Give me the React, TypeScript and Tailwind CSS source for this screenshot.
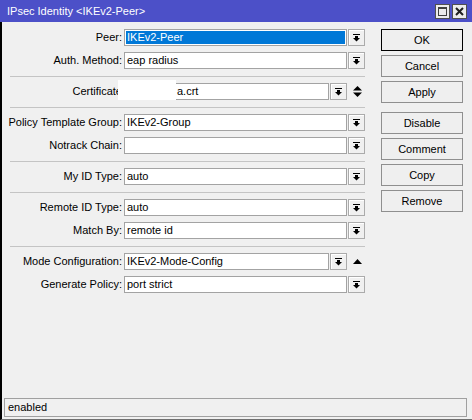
import React from 'react';

type Field = {
  label: string;
  value: string;
  selected?: boolean;
  short?: boolean;
  side?: 'updown' | 'up';
};

const groups: Field[][] = [
  [
    { label: 'Peer:', value: 'IKEv2-Peer', selected: true },
    { label: 'Auth. Method:', value: 'eap radius' },
  ],
  [{ label: 'Certificate', value: 'a.crt', short: true, side: 'updown' }],
  [
    { label: 'Policy Template Group:', value: 'IKEv2-Group' },
    { label: 'Notrack Chain:', value: '' },
  ],
  [{ label: 'My ID Type:', value: 'auto' }],
  [
    { label: 'Remote ID Type:', value: 'auto' },
    { label: 'Match By:', value: 'remote id' },
  ],
  [
    { label: 'Mode Configuration:', value: 'IKEv2-Mode-Config', short: true, side: 'up' },
    { label: 'Generate Policy:', value: 'port strict' },
  ],
];

const buttons = [['OK', 'Cancel', 'Apply'], ['Disable', 'Comment', 'Copy', 'Remove']];

const DropIcon = () => (
  <svg width="7" height="8" viewBox="0 0 7 8" fill="#000">
    <rect x="0" y="0" width="7" height="1" />
    <rect x="2" y="2" width="3" height="2" />
    <polygon points="0,4 7,4 3.5,7.5" />
  </svg>
);

const FieldRow = ({ f }: { f: Field }) => (
  <div className="relative flex h-[17px] items-stretch">
    <div className="w-[120px] text-right leading-[17px] whitespace-nowrap">{f.label}</div>
    <div
      className={`ml-[2px] flex border border-[#a3a3a3] bg-white p-[1px] ${f.short ? 'w-[205px]' : 'w-[223px]'}`}
    >
      <div
        className={`flex-1 pl-[1px] leading-[13px] whitespace-nowrap ${
          f.selected ? 'bg-[#0078d7] text-white' : ''
        } ${f.label === 'Certificate' ? 'pl-[51px]' : ''}`}
      >
        {f.value}
      </div>
    </div>
    <div className="ml-[1px] flex w-[17px] items-center justify-center border border-[#ababab] bg-[#f0f0f0] shadow-[inset_1px_1px_0_#fff]">
      <DropIcon />
    </div>
    {f.side === 'updown' && (
      <svg className="ml-[6px] self-center" width="9" height="11" viewBox="0 0 9 11" fill="#000">
        <polygon points="0,4.5 9,4.5 4.5,0" />
        <polygon points="0,6.5 9,6.5 4.5,11" />
      </svg>
    )}
    {f.side === 'up' && (
      <svg className="ml-[6px] self-center" width="9" height="5" viewBox="0 0 9 5" fill="#000">
        <polygon points="0,5 9,5 4.5,0" />
      </svg>
    )}
    {f.label === 'Certificate' && (
      <div className="absolute left-[116px] top-[-3px] h-[20px] w-[58px] bg-white" />
    )}
  </div>
);

export default function App() {
  return (
    <div className="flex h-[420px] w-[472px] flex-col bg-[#f0f0f0] font-['Liberation_Sans',Arial,sans-serif] text-[11px] text-black">
      {/* title bar */}
      <div className="flex h-[22px] items-center bg-[#4c50c8] pl-[7px] pr-[5px] text-white">
        <span className="flex-1 text-[11px]">IPsec Identity &lt;IKEv2-Peer&gt;</span>
        <div className="flex gap-[2px]">
          <div className="flex h-[15px] w-[15px] items-center justify-center border border-[#505050] bg-[#ececec]">
            <svg width="9" height="9" viewBox="0 0 9 9">
              <rect x="0.5" y="0.5" width="8" height="8" fill="none" stroke="#404040" />
              <rect x="0" y="0" width="9" height="2" fill="#404040" />
            </svg>
          </div>
          <div className="flex h-[15px] w-[15px] items-center justify-center border border-[#505050] bg-[#ececec]">
            <svg width="9" height="9" viewBox="0 0 9 9">
              <path d="M1 1 L8 8 M8 1 L1 8" stroke="#202020" strokeWidth="2" />
            </svg>
          </div>
        </div>
      </div>

      <div className="flex flex-1 flex-col border-b border-l-2 border-b-[#707070] border-l-black">
        <div className="flex flex-1 pt-[7px]">
          <div className="flex w-[363px] flex-col">
            {groups.map((g, gi) => (
              <div key={gi} className="flex flex-col">
                {gi > 0 && <div className="mb-[6px] ml-[8px] mt-[7px] h-px w-[355px] bg-[#c4c4c4]" />}
                <div className="flex flex-col gap-[6px]">
                  {g.map((f) => (
                    <FieldRow key={f.label} f={f} />
                  ))}
                </div>
              </div>
            ))}
          </div>
          <div className="ml-[16px] flex w-[82px] flex-col gap-[9px]">
            {buttons.map((set, si) => (
              <div key={si} className="flex flex-col gap-[4px]">
                {set.map((b) => (
                  <div
                    key={b}
                    className={`flex h-[22px] items-center justify-center border bg-[#efefef] ${
                      b === 'OK' ? 'border-black' : 'border-[#8f8f8f]'
                    }`}
                  >
                    {b}
                  </div>
                ))}
              </div>
            ))}
          </div>
        </div>
        <div className="mb-[2px] ml-[2px] mr-[5px] flex h-[19px] items-center border border-[#a0a0a0] pl-[3px]">
          enabled
        </div>
      </div>
    </div>
  );
}
